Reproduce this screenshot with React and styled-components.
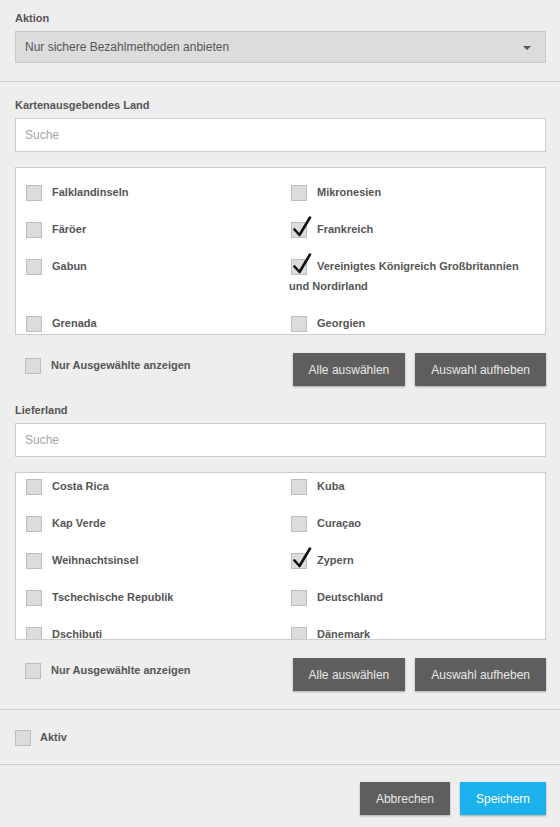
import React from 'react'
import styled, { createGlobalStyle } from 'styled-components'

const issuerCountries = [
  { name: 'Falklandinseln' },
  { name: 'Mikronesien' },
  { name: 'Färöer' },
  { name: 'Frankreich', checked: true },
  { name: 'Gabun' },
  { name: 'Vereinigtes Königreich Großbritannien und Nordirland', checked: true },
  { name: 'Grenada' },
  { name: 'Georgien' },
  { name: 'Ghana' },
  { name: 'Gibraltar' },
]

const deliveryCountries = [
  { name: 'Costa Rica' },
  { name: 'Kuba' },
  { name: 'Kap Verde' },
  { name: 'Curaçao' },
  { name: 'Weihnachtsinsel' },
  { name: 'Zypern', checked: true },
  { name: 'Tschechische Republik' },
  { name: 'Deutschland' },
  { name: 'Dschibuti' },
  { name: 'Dänemark' },
  { name: 'Dominica' },
  { name: 'Dominikanische Republik' },
]

const Check = ({ checked }) => (
  <Box>
    {checked && (
      <svg width="20" height="22" viewBox="0 0 20 22">
        <path d="M2.5 13.5 L7.5 19 L18 1.5" fill="none" stroke="#111" strokeWidth="2.6" strokeLinecap="round" strokeLinejoin="round" />
      </svg>
    )}
  </Box>
)

const CountryPicker = ({ label, countries, scroll }) => (
  <>
    <Label>{label}</Label>
    <Search placeholder="Suche" />
    <List>
      <Grid $scroll={scroll}>
        {countries.map((c) => (
          <Item key={c.name}>
            <Check checked={c.checked} />
            {c.name}
          </Item>
        ))}
      </Grid>
    </List>
    <ListFooter>
      <OnlySelected>
        <Check />
        Nur Ausgewählte anzeigen
      </OnlySelected>
      <Button>Alle auswählen</Button>
      <Button>Auswahl aufheben</Button>
    </ListFooter>
  </>
)

const App = () => {
  return (
    <>
      <GlobalStyle />
      <Page>
        <Section $pad="12px 14px 18px 15px">
          <Label>Aktion</Label>
          <Select>
            Nur sichere Bezahlmethoden anbieten
            <Caret />
          </Select>
        </Section>
        <Section $pad="17px 14px 18px 15px">
          <CountryPicker label="Kartenausgebendes Land" countries={issuerCountries} scroll={0} />
          <CountryPicker label="Lieferland" countries={deliveryCountries} scroll={11} />
        </Section>
        <Section $pad="17px 14px 17px 15px">
          <ActiveRow>
            <Check />
            Aktiv
          </ActiveRow>
        </Section>
        <Actions>
          <Button>Abbrechen</Button>
          <Button $primary>Speichern</Button>
        </Actions>
      </Page>
    </>
  )
}

// ///// Style ////////
const GlobalStyle = createGlobalStyle`
  body {
    margin: 0;
    background: #eeeeee;
    font-family: "Liberation Sans", Arial, Helvetica, sans-serif;
    color: #555;
  }
`

const Page = styled.div`
  width: 560px;
  min-height: 827px;
  background: #eeeeee;
`

const Section = styled.div`
  padding: ${(p) => p.$pad};
  border-bottom: 1px solid #cfcfcf;
`

const Label = styled.div`
  font-size: 11px;
  font-weight: bold;
  line-height: 13px;
  color: #555;
  margin-bottom: 6px;
`

const Select = styled.div`
  position: relative;
  height: 32px;
  box-sizing: border-box;
  display: flex;
  align-items: center;
  padding: 0 9px;
  background: #dcdcdc;
  border: 1px solid #c9c9c9;
  font-size: 12px;
  color: #555;
`

const Caret = styled.span`
  position: absolute;
  right: 14px;
  top: 14px;
  border-left: 4px solid transparent;
  border-right: 4px solid transparent;
  border-top: 4px solid #555;
`

const Search = styled.input`
  display: block;
  width: 100%;
  height: 34px;
  box-sizing: border-box;
  margin: 1px 0 15px;
  padding: 0 9px;
  border: 1px solid #cccccc;
  background: #fff;
  font-family: inherit;
  font-size: 12px;
  color: #555;
  outline: none;
  &::placeholder {
    color: #a5a5a5;
  }
`

const List = styled.div`
  height: 168px;
  box-sizing: border-box;
  border: 1px solid #cccccc;
  background: #fff;
  overflow: hidden;
  padding: 14px 15px 0 8px;
`

const Grid = styled.div`
  display: grid;
  grid-template-columns: 265px 1fr;
  margin-top: ${(p) => -p.$scroll}px;
`

const Item = styled.div`
  font-size: 11px;
  font-weight: bold;
  line-height: 20px;
  color: #555;
  margin-bottom: 17px;
`

const Box = styled.span`
  position: relative;
  display: inline-block;
  width: 16px;
  height: 16px;
  box-sizing: border-box;
  margin: 0 10px 0 2px;
  vertical-align: middle;
  background: #dcdcdc;
  border: 1px solid #bdbdbd;
  svg {
    position: absolute;
    left: 0;
    top: -7px;
  }
`

const ListFooter = styled.div`
  display: flex;
  align-items: flex-start;
  gap: 10px;
  margin: 18px 0 18px;
  &:last-child {
    margin-bottom: 0;
  }
`

const OnlySelected = styled.div`
  flex: 1;
  padding: 2px 0 0 8px;
  font-size: 11px;
  font-weight: bold;
  line-height: 20px;
  white-space: nowrap;
  color: #555;
`

const ActiveRow = styled.div`
  font-size: 11px;
  font-weight: bold;
  line-height: 20px;
  color: #555;
  margin-left: -2px;
  ${Box} {
    margin-right: 9px;
  }
`

const Button = styled.button`
  height: 33px;
  padding: 0 16px;
  border: none;
  background: ${(p) => (p.$primary ? '#1cb0ec' : '#5e5e5e')};
  color: ${(p) => (p.$primary ? '#fff' : '#e8e8e8')};
  font-family: inherit;
  font-size: 12px;
  white-space: nowrap;
  box-shadow: 0 1px 2px rgba(0, 0, 0, 0.3);
  cursor: pointer;
`

const Actions = styled.div`
  display: flex;
  justify-content: flex-end;
  gap: 10px;
  padding: 17px 14px 12px 15px;
`

export default App
